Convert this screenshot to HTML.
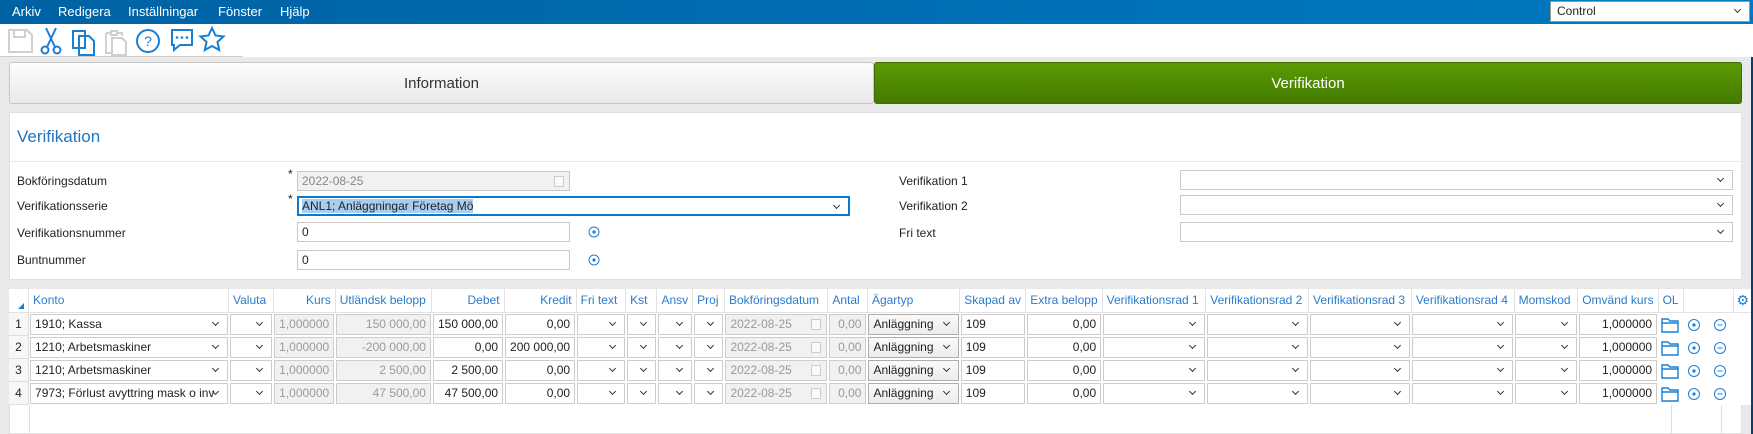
<!DOCTYPE html>
<html><head><meta charset="utf-8"><style>
*{box-sizing:border-box;margin:0;padding:0}
body{width:1753px;height:434px;overflow:hidden;background:#e9e9e9;font-family:"Liberation Sans",sans-serif;font-size:12px;color:#222;position:relative}
.abs{position:absolute}
#menu{left:0;top:0;width:1753px;height:24px;background:linear-gradient(90deg,#0062a3,#0070b8 60%,#0079c2)}
#menu span{position:absolute;top:4px;color:#fff;font-size:13px}
#tool{left:0;top:24px;width:1753px;height:33px;background:#fff}
.tab{top:62px;height:42px;line-height:42px;text-align:center;font-size:15px;border-radius:3px}
.lbl{position:absolute;font-size:12px;color:#222}
.in{position:absolute;height:20px;border:1px solid #c8c8c8;background:#fff;line-height:18px;padding:0 4px;font-size:12px}
.dd::after,.c .dd::after{content:"";position:absolute;right:9px;top:5px;width:4px;height:4px;border-right:1px solid #333;border-bottom:1px solid #333;transform:rotate(45deg)}
table{position:absolute;left:9px;top:289px;border-collapse:collapse;table-layout:fixed;background:#fff}
th{height:23px;font-weight:normal;color:#2b7bcb;font-size:12px;border-right:1px solid #e2e2e2;border-bottom:1px solid #e2e2e2;padding:0 4px;white-space:nowrap;overflow:hidden;text-align:left}
th.r{text-align:right}
td{height:23px;padding:0;border:none;position:relative;line-height:0;vertical-align:top}
td.n{border-right:1px solid #ddd;border-bottom:1px solid #ddd;text-align:center;background:#f7f7f7;line-height:22px;vertical-align:middle}
.c{height:21px;margin:1px;border:1px solid #cdcdcd;line-height:19px;padding:0 4px;white-space:nowrap;overflow:hidden;position:relative;background:#fff}
td svg{display:block}
.r{text-align:right}
.g{background:#f1f1f1;color:#9a9a9a}
.btn{background:linear-gradient(#fafafa,#ececec);border-color:#adadad}
.cal{position:absolute;right:5px;top:4px;width:10px;height:11px;border:1px solid #ccc;background:#fafafa}
</style></head><body>
<div id="menu" class="abs">
<span style="left:12px">Arkiv</span><span style="left:58px">Redigera</span><span style="left:128px">Inställningar</span><span style="left:218px">Fönster</span><span style="left:280px">Hjälp</span>
<div class="abs" style="left:1550px;top:1px;width:200px;height:21px;background:#fff;border:1px solid #999;font-size:12px;line-height:19px;padding-left:6px">Control<div class="dd" style="position:absolute;right:0;top:0;width:20px;height:19px"></div></div>
</div>
<div id="tool" class="abs">
<svg width="250" height="33" style="position:absolute;left:0;top:0">
<g fill="none" stroke-width="2">
<path d="M9 6h18l5 5v17H9z M14 6v7h11V6" stroke="#d0d0d0"/>
<g stroke="#1a7fd4"><circle cx="45" cy="26" r="3.5"/><circle cx="57" cy="26" r="3.5"/><path d="M47 23L56 4M55 23L46 4"/></g>
<path d="M73 7h12v17H73z M79 12h10l5 5v14H79z" stroke="#1a7fd4" fill="#fff"/>
<path d="M106 9h5M117 9h5v3M106 9v20h6M111 7h6v4h-6z M112 14h10l4 4v13h-14z" stroke="#d0d0d0"/>
<circle cx="148" cy="17" r="11" stroke="#1a7fd4"/>
<path d="M172 6h20v15h-12l-6 5v-5h-2z" stroke="#1a7fd4"/>
<path d="M212 4l3.5 7.5 8 1-6 5.5 1.7 8-7.2-4-7.2 4 1.7-8-6-5.5 8-1z" stroke="#1a7fd4"/>
</g>
<text x="148" y="22" font-size="14" fill="#1a7fd4" text-anchor="middle" font-family="Liberation Sans">?</text>
<g fill="#1a7fd4"><circle cx="177" cy="13.5" r="1.3"/><circle cx="182" cy="13.5" r="1.3"/><circle cx="187" cy="13.5" r="1.3"/></g>
</svg>
<div class="abs" style="left:0;top:32px;width:243px;height:1px;background:#ccc"></div>
</div>
<div class="abs tab" style="left:9px;width:865px;background:linear-gradient(#fdfdfd,#e9e9e9);border:1px solid #c6c6c6;color:#333">Information</div>
<div class="abs tab" style="left:874px;width:868px;background:linear-gradient(#5b9b03,#447a00);color:#fff;border:1px solid #3f6e00">Verifikation</div>

<div class="abs" style="left:9px;top:112px;width:1733px;height:168px;background:#fff;border:1px solid #e0e0e0">
<div class="abs" style="left:7px;top:14px;font-size:17px;color:#1f76c2">Verifikation</div>
<div class="abs" style="left:0;top:48px;width:1731px;height:1px;background:#e8e8e8"></div>
</div>
<div class="lbl" style="left:17px;top:174px">Bokföringsdatum</div>
<div class="lbl" style="left:17px;top:199px">Verifikationsserie</div>
<div class="lbl" style="left:17px;top:226px">Verifikationsnummer</div>
<div class="lbl" style="left:17px;top:253px">Buntnummer</div>
<div class="lbl" style="left:288px;top:167px">*</div>
<div class="lbl" style="left:288px;top:192px">*</div>
<div class="in" style="left:297px;top:171px;width:273px;background:#f1f1f1;color:#888">2022-08-25<span class="cal" style="top:4px"></span></div>
<div class="in dd" style="left:297px;top:196px;width:553px;border:2px solid #0a7ad0;line-height:16px;padding-left:3px"><span style="background:#a9cdf0">ANL1; Anläggningar Företag Mö</span></div>
<div class="in" style="left:297px;top:222px;width:273px">0</div>
<div class="in" style="left:297px;top:250px;width:273px">0</div>
<svg class="abs" style="left:588px;top:226px" width="12" height="40"><g fill="none" stroke="#1a7fd4"><circle cx="6" cy="6" r="5"/><circle cx="6" cy="34" r="5"/></g><g fill="#1a7fd4"><circle cx="6" cy="6" r="1.6"/><circle cx="6" cy="34" r="1.6"/></g></svg>
<div class="lbl" style="left:899px;top:174px">Verifikation 1</div>
<div class="lbl" style="left:899px;top:199px">Verifikation 2</div>
<div class="lbl" style="left:899px;top:226px">Fri text</div>
<div class="in dd" style="left:1180px;top:170px;width:553px"></div>
<div class="in dd" style="left:1180px;top:195px;width:553px"></div>
<div class="in dd" style="left:1180px;top:222px;width:553px"></div>

<div class="abs" style="left:9px;top:289px;width:1733px;height:145px;background:#fff;border:1px solid #e0e0e0"></div>
<div class="abs" style="left:9px;top:289px;width:21px;height:145px;border-right:1px solid #ddd"></div>
<div class="abs" style="left:1671px;top:312px;width:51px;height:122px;border-left:1px solid #ddd;border-right:1px solid #ddd"></div>
<table>
<colgroup><col style="width:21px"><col style="width:201px"><col style="width:45px"><col style="width:56px"><col style="width:97px"><col style="width:69px"><col style="width:64px"><col style="width:50px"><col style="width:32px"><col style="width:35px"><col style="width:32px"><col style="width:104px"><col style="width:40px"><col style="width:95px"><col style="width:66px"><col style="width:76px"><col style="width:104px"><col style="width:103px"><col style="width:103px"><col style="width:103px"><col style="width:64px"><col style="width:80px"><col style="width:23px"><col style="width:50px"><col style="width:20px"></colgroup>
<tr><th style="position:relative"><span style="position:absolute;left:9px;bottom:3px;border-left:6px solid transparent;border-bottom:6px solid #1a7fd4"></span></th><th>Konto</th><th>Valuta</th><th class="r">Kurs</th><th>Utländsk belopp</th><th class="r">Debet</th><th class="r">Kredit</th><th>Fri text</th><th>Kst</th><th>Ansv</th><th>Proj</th><th>Bokföringsdatum</th><th>Antal</th><th>Ägartyp</th><th>Skapad av</th><th>Extra belopp</th><th>Verifikationsrad 1</th><th>Verifikationsrad 2</th><th>Verifikationsrad 3</th><th>Verifikationsrad 4</th><th>Momskod</th><th>Omvänd kurs</th><th>OL</th><th></th><th style="padding:0;text-align:center;color:#1a7fd4;font-size:14px">⚙</th></tr>
<tr><td class="n">1</td><td><div class="c dd">1910; Kassa</div></td><td><div class="c dd"></div></td><td><div class="c g r">1,000000</div></td><td><div class="c g r">150 000,00</div></td><td><div class="c r">150 000,00</div></td><td><div class="c r">0,00</div></td><td><div class="c dd"></div></td><td><div class="c dd"></div></td><td><div class="c dd"></div></td><td><div class="c dd"></div></td><td><div class="c g">2022-08-25<span class="cal"></span></div></td><td><div class="c g r">0,00</div></td><td><div class="c dd btn">Anläggning</div></td><td><div class="c">109</div></td><td><div class="c r">0,00</div></td><td><div class="c dd"></div></td><td><div class="c dd"></div></td><td><div class="c dd"></div></td><td><div class="c dd"></div></td><td><div class="c dd"></div></td><td><div class="c r">1,000000</div></td><td><svg width="23" height="23"><path d="M4 6h6l2 2h8v11H4z M4 10h16" fill="none" stroke="#1a7fd4" stroke-width="1.4"/></svg></td><td><svg width="50" height="23"><g fill="none" stroke="#1a7fd4"><circle cx="11" cy="12" r="5.5"/><circle cx="37" cy="12" r="5.5"/></g><circle cx="11" cy="12" r="1.6" fill="#1a7fd4"/><path d="M34.5 12h5" stroke="#1a7fd4"/></svg></td><td></td></tr>
<tr><td class="n">2</td><td><div class="c dd">1210; Arbetsmaskiner</div></td><td><div class="c dd"></div></td><td><div class="c g r">1,000000</div></td><td><div class="c g r">-200 000,00</div></td><td><div class="c r">0,00</div></td><td><div class="c r">200 000,00</div></td><td><div class="c dd"></div></td><td><div class="c dd"></div></td><td><div class="c dd"></div></td><td><div class="c dd"></div></td><td><div class="c g">2022-08-25<span class="cal"></span></div></td><td><div class="c g r">0,00</div></td><td><div class="c dd btn">Anläggning</div></td><td><div class="c">109</div></td><td><div class="c r">0,00</div></td><td><div class="c dd"></div></td><td><div class="c dd"></div></td><td><div class="c dd"></div></td><td><div class="c dd"></div></td><td><div class="c dd"></div></td><td><div class="c r">1,000000</div></td><td><svg width="23" height="23"><path d="M4 6h6l2 2h8v11H4z M4 10h16" fill="none" stroke="#1a7fd4" stroke-width="1.4"/></svg></td><td><svg width="50" height="23"><g fill="none" stroke="#1a7fd4"><circle cx="11" cy="12" r="5.5"/><circle cx="37" cy="12" r="5.5"/></g><circle cx="11" cy="12" r="1.6" fill="#1a7fd4"/><path d="M34.5 12h5" stroke="#1a7fd4"/></svg></td><td></td></tr>
<tr><td class="n">3</td><td><div class="c dd">1210; Arbetsmaskiner</div></td><td><div class="c dd"></div></td><td><div class="c g r">1,000000</div></td><td><div class="c g r">2 500,00</div></td><td><div class="c r">2 500,00</div></td><td><div class="c r">0,00</div></td><td><div class="c dd"></div></td><td><div class="c dd"></div></td><td><div class="c dd"></div></td><td><div class="c dd"></div></td><td><div class="c g">2022-08-25<span class="cal"></span></div></td><td><div class="c g r">0,00</div></td><td><div class="c dd btn">Anläggning</div></td><td><div class="c">109</div></td><td><div class="c r">0,00</div></td><td><div class="c dd"></div></td><td><div class="c dd"></div></td><td><div class="c dd"></div></td><td><div class="c dd"></div></td><td><div class="c dd"></div></td><td><div class="c r">1,000000</div></td><td><svg width="23" height="23"><path d="M4 6h6l2 2h8v11H4z M4 10h16" fill="none" stroke="#1a7fd4" stroke-width="1.4"/></svg></td><td><svg width="50" height="23"><g fill="none" stroke="#1a7fd4"><circle cx="11" cy="12" r="5.5"/><circle cx="37" cy="12" r="5.5"/></g><circle cx="11" cy="12" r="1.6" fill="#1a7fd4"/><path d="M34.5 12h5" stroke="#1a7fd4"/></svg></td><td></td></tr>
<tr><td class="n">4</td><td><div class="c dd">7973; Förlust avyttring mask o inv</div></td><td><div class="c dd"></div></td><td><div class="c g r">1,000000</div></td><td><div class="c g r">47 500,00</div></td><td><div class="c r">47 500,00</div></td><td><div class="c r">0,00</div></td><td><div class="c dd"></div></td><td><div class="c dd"></div></td><td><div class="c dd"></div></td><td><div class="c dd"></div></td><td><div class="c g">2022-08-25<span class="cal"></span></div></td><td><div class="c g r">0,00</div></td><td><div class="c dd btn">Anläggning</div></td><td><div class="c">109</div></td><td><div class="c r">0,00</div></td><td><div class="c dd"></div></td><td><div class="c dd"></div></td><td><div class="c dd"></div></td><td><div class="c dd"></div></td><td><div class="c dd"></div></td><td><div class="c r">1,000000</div></td><td><svg width="23" height="23"><path d="M4 6h6l2 2h8v11H4z M4 10h16" fill="none" stroke="#1a7fd4" stroke-width="1.4"/></svg></td><td><svg width="50" height="23"><g fill="none" stroke="#1a7fd4"><circle cx="11" cy="12" r="5.5"/><circle cx="37" cy="12" r="5.5"/></g><circle cx="11" cy="12" r="1.6" fill="#1a7fd4"/><path d="M34.5 12h5" stroke="#1a7fd4"/></svg></td><td></td></tr>
</table>
<div class="abs" style="left:1751px;top:57px;width:2px;height:377px;background:#0a3f6e"></div>
</body></html>
